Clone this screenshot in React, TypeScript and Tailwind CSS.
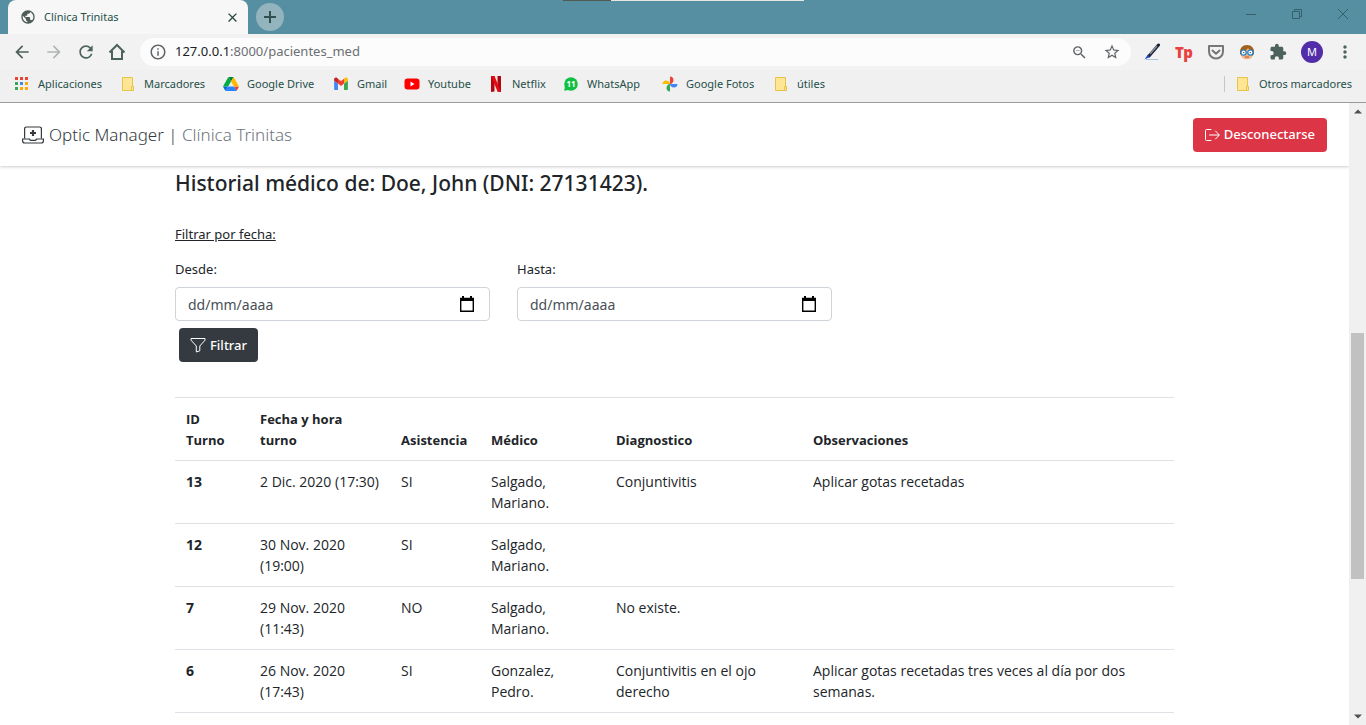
import React from "react";
import {
  MdArrowBack,
  MdArrowForward,
  MdClose,
  MdExtension,
  MdInfoOutline,
  MdMoreVert,
  MdOutlineZoomOut,
  MdPublic,
  MdRefresh,
  MdStarBorder,
} from "react-icons/md";

/* ---------- icons ---------- */

const HomeIcon = () => (
  <svg width="18" height="18" viewBox="0 0 18 18" fill="none" stroke="currentColor" strokeWidth="2">
    <path d="M1.500 9.500 9 2l7.500 7.500M4 8v8h10V8" />
  </svg>
);

const AppsIcon = () => (
  <svg width="16" height="16" viewBox="0 0 16 16">
    <path fill="#ea4335" d="M1 1h3v3H1zM6 1h3v3H6zM11 1h3v3h-3z" />
    <path fill="#34a853" d="M1 6h3v3H1zM1 11h3v3H1z" />
    <path fill="#4285f4" d="M6 6h3v3H6z" />
    <path fill="#fbab05" d="M11 6h3v3h-3zM6 11h3v3H6zM11 11h3v3h-3z" />
  </svg>
);

const FolderIcon = () => (
  <svg width="16" height="16" viewBox="0 0 16 16">
    <path d="M2.500 1.500h10v9h1v4h-11z" fill="#ffe694" stroke="#e8c34a" />
    <path d="M11.500 14.500v-4h2v4z" fill="#ffe694" stroke="#e8c34a" />
  </svg>
);

const DriveIcon = () => (
  <svg width="16" height="14" viewBox="0 0 87.3 78">
    <path fill="#0066da" d="m6.600 66.850 3.850 6.650c.8 1.400 1.950 2.500 3.300 3.300l13.750-23.800h-27.500c0 1.550.4 3.100 1.200 4.500z" />
    <path fill="#00ac47" d="m43.650 25-13.750-23.800c-1.350.8-2.500 1.900-3.300 3.300l-25.400 44a9.060 9.060 0 0 0 -1.200 4.500h27.500z" />
    <path fill="#ea4335" d="m73.550 76.800c1.350-.8 2.500-1.900 3.300-3.300l1.600-2.750 7.650-13.250c.8-1.400 1.200-2.950 1.200-4.500h-27.500l5.850 11.500z" />
    <path fill="#00832d" d="m43.650 25 13.750-23.800c-1.350-.8-2.900-1.200-4.500-1.200h-18.500c-1.600 0-3.150.45-4.500 1.200z" />
    <path fill="#2684fc" d="m59.800 53h-32.300l-13.750 23.800c1.350.8 2.900 1.200 4.500 1.200h50.800c1.600 0 3.150-.45 4.500-1.200z" />
    <path fill="#ffba00" d="m73.400 26.500-12.700-22c-.8-1.400-1.950-2.500-3.300-3.300l-13.750 23.800 16.150 28h27.450c0-1.550-.4-3.100-1.200-4.500z" />
  </svg>
);

const GmailIcon = () => (
  <svg width="16" height="16" viewBox="46 34 84 84">
    <path fill="#4285f4" d="M58 108h14V74L52 59v43c0 3.320 2.690 6 6 6" />
    <path fill="#34a853" d="M104 108h14c3.320 0 6-2.690 6-6V59l-20 15" />
    <path fill="#fbbc04" d="M104 48v26l20-15v-8c0-7.420-8.470-11.650-14.400-7.200" />
    <path fill="#ea4335" d="M72 74V48l16 12 16-12v26L88 86" />
    <path fill="#c5221f" d="M52 51v8l20 15V48l-5.600-4.200c-5.940-4.450-14.400-.22-14.400 7.200" />
  </svg>
);

const YoutubeIcon = () => (
  <svg width="16" height="16" viewBox="0 0 16 16">
    <rect x="0.500" y="2.500" width="15" height="11" rx="3" fill="#f00" />
    <path d="M6.500 5.500v5L10.500 8z" fill="#fff" />
  </svg>
);

const NetflixIcon = () => (
  <svg width="16" height="16" viewBox="0 0 16 16">
    <path fill="#b1060f" d="M3 0h3.500v15.600L3 16zM9.500 0H13v16l-3.500-.4z" />
    <path fill="#e50914" d="M3 0h3.500L13 16l-3.500-.4z" />
  </svg>
);

const WhatsAppIcon = () => (
  <svg width="16" height="16" viewBox="0 0 16 16">
    <circle cx="8" cy="8" r="6.800" fill="#0fc143" />
    <path d="M1.200 14.800 2 10l3.500 4z" fill="#0fc143" />
    <text x="8" y="11" fill="#fff" textAnchor="middle" className="text-[8px] font-bold">
      11
    </text>
  </svg>
);

const PhotosIcon = () => (
  <svg width="16" height="16" viewBox="0 0 16 16">
    <path fill="#ea4335" d="M8 8V.5a3.750 3.750 0 0 1 3.500 3.750C11.500 6 10 8 8 8z" />
    <path fill="#4285f4" d="M8 8h7.500a3.750 3.750 0 0 1-3.750 3.500C10 11.500 8 10 8 8z" />
    <path fill="#34a853" d="M8 8v7.500a3.750 3.750 0 0 1-3.500-3.750C4.500 10 6 8 8 8z" />
    <path fill="#fbbc04" d="M8 8H.5a3.750 3.750 0 0 1 3.750-3.500C6 4.500 8 6 8 8z" />
  </svg>
);

const PenIcon = () => (
  <svg width="18" height="18" viewBox="0 0 18 18">
    <path d="M3 16.500h12" stroke="#a9bfee" strokeWidth="1" />
    <path d="M15.500 2 6 13" stroke="#1d2130" strokeWidth="3" strokeLinecap="round" />
    <path d="M14 3 7 11" stroke="#8b93a8" strokeWidth="1.300" />
    <path d="M5 11.500 1.500 16.500 6.500 14z" fill="#1747d1" />
  </svg>
);

const PocketIcon = () => (
  <svg width="18" height="18" viewBox="0 0 18 18" fill="none" stroke="#777" strokeWidth="2" strokeLinejoin="round">
    <path d="M2 3h14v5.500a7 7 0 0 1-14 0z" />
    <path d="m5.500 7.500 3.500 3.300 3.500-3.300" strokeLinecap="round" />
  </svg>
);

const FaceIcon = () => (
  <svg width="16" height="16" viewBox="0 0 16 16">
    <path d="M1 9.500C.5 4 3.500 1 8 1s7.500 3 7 8.500L13.500 12h-11z" fill="#a0621c" />
    <path d="M2.500 7.500c3 0 5.500-1.500 6.500-3.500 1 2 3 3 4.500 3.500V11c0 3-2.500 4.300-5.500 4.300S2.500 14 2.500 11z" fill="#f3b583" />
    <circle cx="4.600" cy="8.600" r="2.600" fill="#fff" stroke="#1a7fd0" strokeWidth="1.200" />
    <circle cx="11.400" cy="8.600" r="2.600" fill="#fff" stroke="#1a7fd0" strokeWidth="1.200" />
    <circle cx="4.800" cy="8.600" r="0.700" fill="#234" />
    <circle cx="11.200" cy="8.600" r="0.700" fill="#234" />
    <path d="M6 13h4" stroke="#b8573a" />
  </svg>
);

const ClinicLogo = () => (
  <svg width="22" height="18" viewBox="0 0 22 18" fill="none" stroke="#343a40" strokeWidth="1.200">
    <path d="M2.600 12.500V2.800A1.800 1.800 0 0 1 4.400 1h13.200a1.800 1.800 0 0 1 1.800 1.800v9.700" />
    <path d="M.6 13h6.900c.3 1.100 1 1.400 1.700 1.400h3.600c.7 0 1.400-.3 1.700-1.400h6.900v1.700a2.300 2.300 0 0 1-2.300 2.300H2.900A2.300 2.300 0 0 1 .6 14.700z" />
    <path d="M11 4v6M8 7h6" strokeWidth="2.200" />
  </svg>
);

const LogoutIcon = () => (
  <svg width="15" height="14" viewBox="0 0 15 14" fill="none" stroke="currentColor" strokeLinecap="round">
    <path d="M6 1.500H1.500A1 1 0 0 0 .5 2.500v9a1 1 0 0 0 1 1H6" />
    <path d="M4.500 7h9.500M10.500 3 14.300 7l-3.800 4" />
  </svg>
);

const FunnelIcon = () => (
  <svg width="16" height="16" viewBox="0 0 16 16" fill="none" stroke="currentColor" strokeLinejoin="round">
    <path d="M1 1.500h14v1.700L9.800 9v4.800l-3.500 1.200V9L1 3.200z" />
  </svg>
);

const CalendarIcon = () => (
  <svg width="16" height="18" viewBox="0 0 16 18" fill="none">
    <path d="M1.700 3.500h12.600v12.800H1.700z" stroke="#000" strokeWidth="1.400" />
    <path d="M1 3h14v3H1zM3 1h2v2H3zM11 1h2v2h-2z" fill="#000" />
  </svg>
);

/* ---------- browser ---------- */

const bookmarks = [
  { label: "Aplicaciones", icon: <AppsIcon />, width: "w-[106px]" },
  { label: "Marcadores", icon: <FolderIcon />, width: "w-[103px]" },
  { label: "Google Drive", icon: <DriveIcon />, width: "w-[110px]" },
  { label: "Gmail", icon: <GmailIcon />, width: "w-[71px]" },
  { label: "Youtube", icon: <YoutubeIcon />, width: "w-[84px]" },
  { label: "Netflix", icon: <NetflixIcon />, width: "w-[75px]" },
  { label: "WhatsApp", icon: <WhatsAppIcon />, width: "w-[99px]" },
  { label: "Google Fotos", icon: <PhotosIcon />, width: "w-[111px]" },
  { label: "útiles", icon: <FolderIcon />, width: "w-[60px]" },
];

const TabStrip = () => (
  <div className="relative flex h-[34px] shrink-0 items-stretch bg-[#568fa2] pl-2">
    <div className="absolute left-[563px] top-0 flex h-px w-[241px]">
      <span className="w-12 bg-[#4f5a50]" />
      <span className="flex-1 bg-[#e6e6e3]" />
    </div>
    <div className="flex w-60 items-center rounded-t-lg bg-[#f7f7f7] pl-3 pr-2 text-[#264f49]">
      <MdPublic size={16} color="#4c5b57" />
      <span className="ml-2 flex-1 text-[11px]">Clínica Trinitas</span>
      <button aria-label="Cerrar pestaña">
        <MdClose size={15} color="#28453f" />
      </button>
    </div>
    <button
      aria-label="Nueva pestaña"
      className="ml-2 mt-[3px] flex size-7 items-center justify-center rounded-full bg-[#93b3bd]"
    >
      <svg width="14" height="14" viewBox="0 0 14 14" stroke="#31504f" strokeWidth="2">
        <path d="M1 7h12M7 1v12" />
      </svg>
    </button>
    <div className="ml-auto mr-[18px] flex h-7 items-center gap-9 text-[#35606c]">
      <button aria-label="Minimizar">
        <svg width="10" height="10" stroke="currentColor">
          <path d="M0 5.500h10" />
        </svg>
      </button>
      <button aria-label="Restaurar">
        <svg width="10" height="10" fill="none" stroke="currentColor">
          <path d="M.5 2.500h7v7h-7zM2.500 2.500v-2h7v7h-2" />
        </svg>
      </button>
      <button aria-label="Cerrar">
        <svg width="10" height="10" stroke="currentColor">
          <path d="m0 0 10 10M10 0 0 10" />
        </svg>
      </button>
    </div>
  </div>
);

const Toolbar = () => (
  <div className="flex h-9 shrink-0 items-center bg-[#f2f2f2] pl-3 pr-[11px] text-[#4c625c]">
    <div className="flex items-center gap-3">
      <button aria-label="Atrás">
        <MdArrowBack size={20} />
      </button>
      <button aria-label="Adelante" className="text-[#b0b6b4]">
        <MdArrowForward size={20} />
      </button>
      <button aria-label="Recargar">
        <MdRefresh size={20} />
      </button>
      <button aria-label="Inicio">
        <HomeIcon />
      </button>
    </div>
    <div className="ml-[14px] flex h-7 flex-1 items-center rounded-full bg-[#fcfcfc] pl-[9px] pr-[10px]">
      <MdInfoOutline size={18} color="#5f6368" />
      <span className="ml-2 flex-1 text-[13px] text-[#6b6f73]">
        <span className="text-[#202124]">127.0.0.1</span>:8000/pacientes_med
      </span>
      <button aria-label="Zoom">
        <MdOutlineZoomOut size={17} color="#5f6368" />
      </button>
      <button aria-label="Añadir a marcadores" className="ml-[15px]">
        <MdStarBorder size={18} color="#5f6368" />
      </button>
    </div>
    <div className="ml-3 flex items-center gap-[14px]">
      <button aria-label="Editor">
        <PenIcon />
      </button>
      <button aria-label="Tp" className="flex w-[18px] justify-center text-[15px] font-black leading-4 text-[#e8423f]">
        Tp
      </button>
      <button aria-label="Pocket">
        <PocketIcon />
      </button>
      <button aria-label="Lector">
        <FaceIcon />
      </button>
      <button aria-label="Extensiones">
        <MdExtension size={18} />
      </button>
    </div>
    <button className="ml-[14px] size-[22px] rounded-full bg-[#512da8] text-[11px] text-white">M</button>
    <button aria-label="Menú" className="ml-3">
      <MdMoreVert size={20} />
    </button>
  </div>
);

const Bookmarks = () => (
  <div className="flex h-[33px] shrink-0 items-center whitespace-nowrap border-b border-[#9b9b9b] bg-[#f0f0f0] pb-1 pl-[14px] pr-[14px] text-[11px] text-[#264f49]">
    {bookmarks.map((b) => (
      <a key={b.label} href="#" className={`flex shrink-0 items-center gap-2 ${b.width}`}>
        {b.icon}
        {b.label}
      </a>
    ))}
    <a href="#" className="ml-auto flex items-center gap-2 border-l border-[#c3c8c7] pl-[10px]">
      <FolderIcon />
      Otros marcadores
    </a>
  </div>
);

const Scrollbar = () => (
  <div className="flex w-[17px] shrink-0 flex-col items-center bg-[#f0f0f0] py-[6px]" aria-hidden="true">
    <svg width="8" height="5" viewBox="0 0 8 5">
      <path d="M0 4.500 4 .5l4 4z" fill="#505050" />
    </svg>
    <div className="grow-[219]" />
    <div className="w-[13px] grow-[246] bg-[#c1c1c1]" />
    <div className="grow-[135]" />
    <svg width="8" height="5" viewBox="0 0 8 5">
      <path d="M0 .5l4 4 4-4z" fill="#505050" />
    </svg>
  </div>
);

/* ---------- page ---------- */

const turnos = [
  { id: 13, fecha: "2 Dic. 2020 (17:30)", asistencia: "SI", medico: "Salgado, Mariano.", diagnostico: "Conjuntivitis", obs: "Aplicar gotas recetadas" },
  { id: 12, fecha: "30 Nov. 2020 (19:00)", asistencia: "SI", medico: "Salgado, Mariano.", diagnostico: "", obs: "" },
  { id: 7, fecha: "29 Nov. 2020 (11:43)", asistencia: "NO", medico: "Salgado, Mariano.", diagnostico: "No existe.", obs: "" },
  { id: 6, fecha: "26 Nov. 2020 (17:43)", asistencia: "SI", medico: "Gonzalez, Pedro.", diagnostico: "Conjuntivitis en el ojo derecho", obs: "Aplicar gotas recetadas tres veces al día por dos semanas." },
];

const Navbar = () => (
  <nav className="relative flex h-[63px] shrink-0 items-center justify-between bg-white px-[22px] shadow-[0_1px_3px_rgba(0,0,0,0.2)]">
    <a href="#" className="flex items-center gap-[5px] text-[17px] font-light text-[#343a40]">
      <ClinicLogo />
      <span>
        Optic Manager | <span className="text-[#6c757d]">Clínica Trinitas</span>
      </span>
    </a>
    <button className="flex h-[34px] items-center gap-1 rounded-[4px] bg-[#dc3545] px-3 text-[13px] font-medium text-white">
      <LogoutIcon />
      Desconectarse
    </button>
  </nav>
);

type DateFieldProps = {
  id: string;
  label: string;
};

const DateField = ({ id, label }: DateFieldProps) => (
  <div>
    <label htmlFor={id} className="mb-[7px] block">
      {label}
    </label>
    <div className="flex h-[34px] items-center rounded-[4px] border border-[#ced4da] pl-3 pr-[14px]">
      <input
        id={id}
        type="text"
        placeholder="dd/mm/aaaa"
        className="min-w-0 flex-1 text-[14px] text-[#495057] outline-none placeholder:text-[#495057]"
      />
      <button type="button" aria-label={`Elegir fecha ${label}`}>
        <CalendarIcon />
      </button>
    </div>
  </div>
);

const Historial = () => (
  <table className="mt-[35px] w-full table-fixed border-b border-[#dee2e6] text-left font-['Open_Sans','Noto_Sans',sans-serif]">
    <colgroup>
      <col className="w-[74px]" />
      <col className="w-[141px]" />
      <col className="w-[90px]" />
      <col className="w-[125px]" />
      <col className="w-[197px]" />
      <col />
    </colgroup>
    <thead>
      <tr className="border-t border-[#dee2e6] align-bottom">
        {["ID Turno", "Fecha y hora turno", "Asistencia", "Médico", "Diagnostico", "Observaciones"].map((h) => (
          <th key={h} className="pb-[9px] pl-[11px] pr-2 pt-[11px] font-bold">
            {h}
          </th>
        ))}
      </tr>
    </thead>
    <tbody className="text-[14px]">
      {turnos.map((t) => (
        <tr key={t.id} className="border-t border-[#dee2e6] align-top">
          <th className="py-[10px] pl-[11px] pr-2 font-bold">{t.id}</th>
          <td className="py-[10px] pl-[11px] pr-2">{t.fecha}</td>
          <td className="py-[10px] pl-[11px] pr-2">{t.asistencia}</td>
          <td className="py-[10px] pl-[11px] pr-2">{t.medico}</td>
          <td className="py-[10px] pl-[11px] pr-2">{t.diagnostico}</td>
          <td className="py-[10px] pl-[11px] pr-2">{t.obs}</td>
        </tr>
      ))}
    </tbody>
  </table>
);

const App = () => {
  return (
    <div className="flex h-screen flex-col overflow-hidden bg-white font-['Noto_Sans','Open_Sans',sans-serif]">
      <TabStrip />
      <Toolbar />
      <Bookmarks />
      <div className="flex min-h-0 flex-1">
        <div className="flex min-w-0 flex-1 flex-col overflow-hidden">
          <Navbar />
          <main className="mx-auto w-full max-w-[999px] text-[13px] leading-[21px] text-[#212529]">
            <h1 className="pt-1 text-[21px] font-medium leading-[26px]">
              Historial médico de: Doe, John (DNI: 27131423).
            </h1>
            <p className="mt-[28px] underline">Filtrar por fecha:</p>
            <form className="mt-[14px]" onSubmit={(e) => e.preventDefault()}>
              <div className="grid grid-cols-3 gap-[27px]">
                <DateField id="desde" label="Desde:" />
                <DateField id="hasta" label="Hasta:" />
              </div>
              <button className="ml-1 mt-[7px] flex h-[34px] items-center gap-1 rounded-[4px] bg-[#343a40] px-[11px] font-medium text-white">
                <FunnelIcon />
                Filtrar
              </button>
            </form>
            <Historial />
          </main>
        </div>
        <Scrollbar />
      </div>
    </div>
  );
};

export default App;
